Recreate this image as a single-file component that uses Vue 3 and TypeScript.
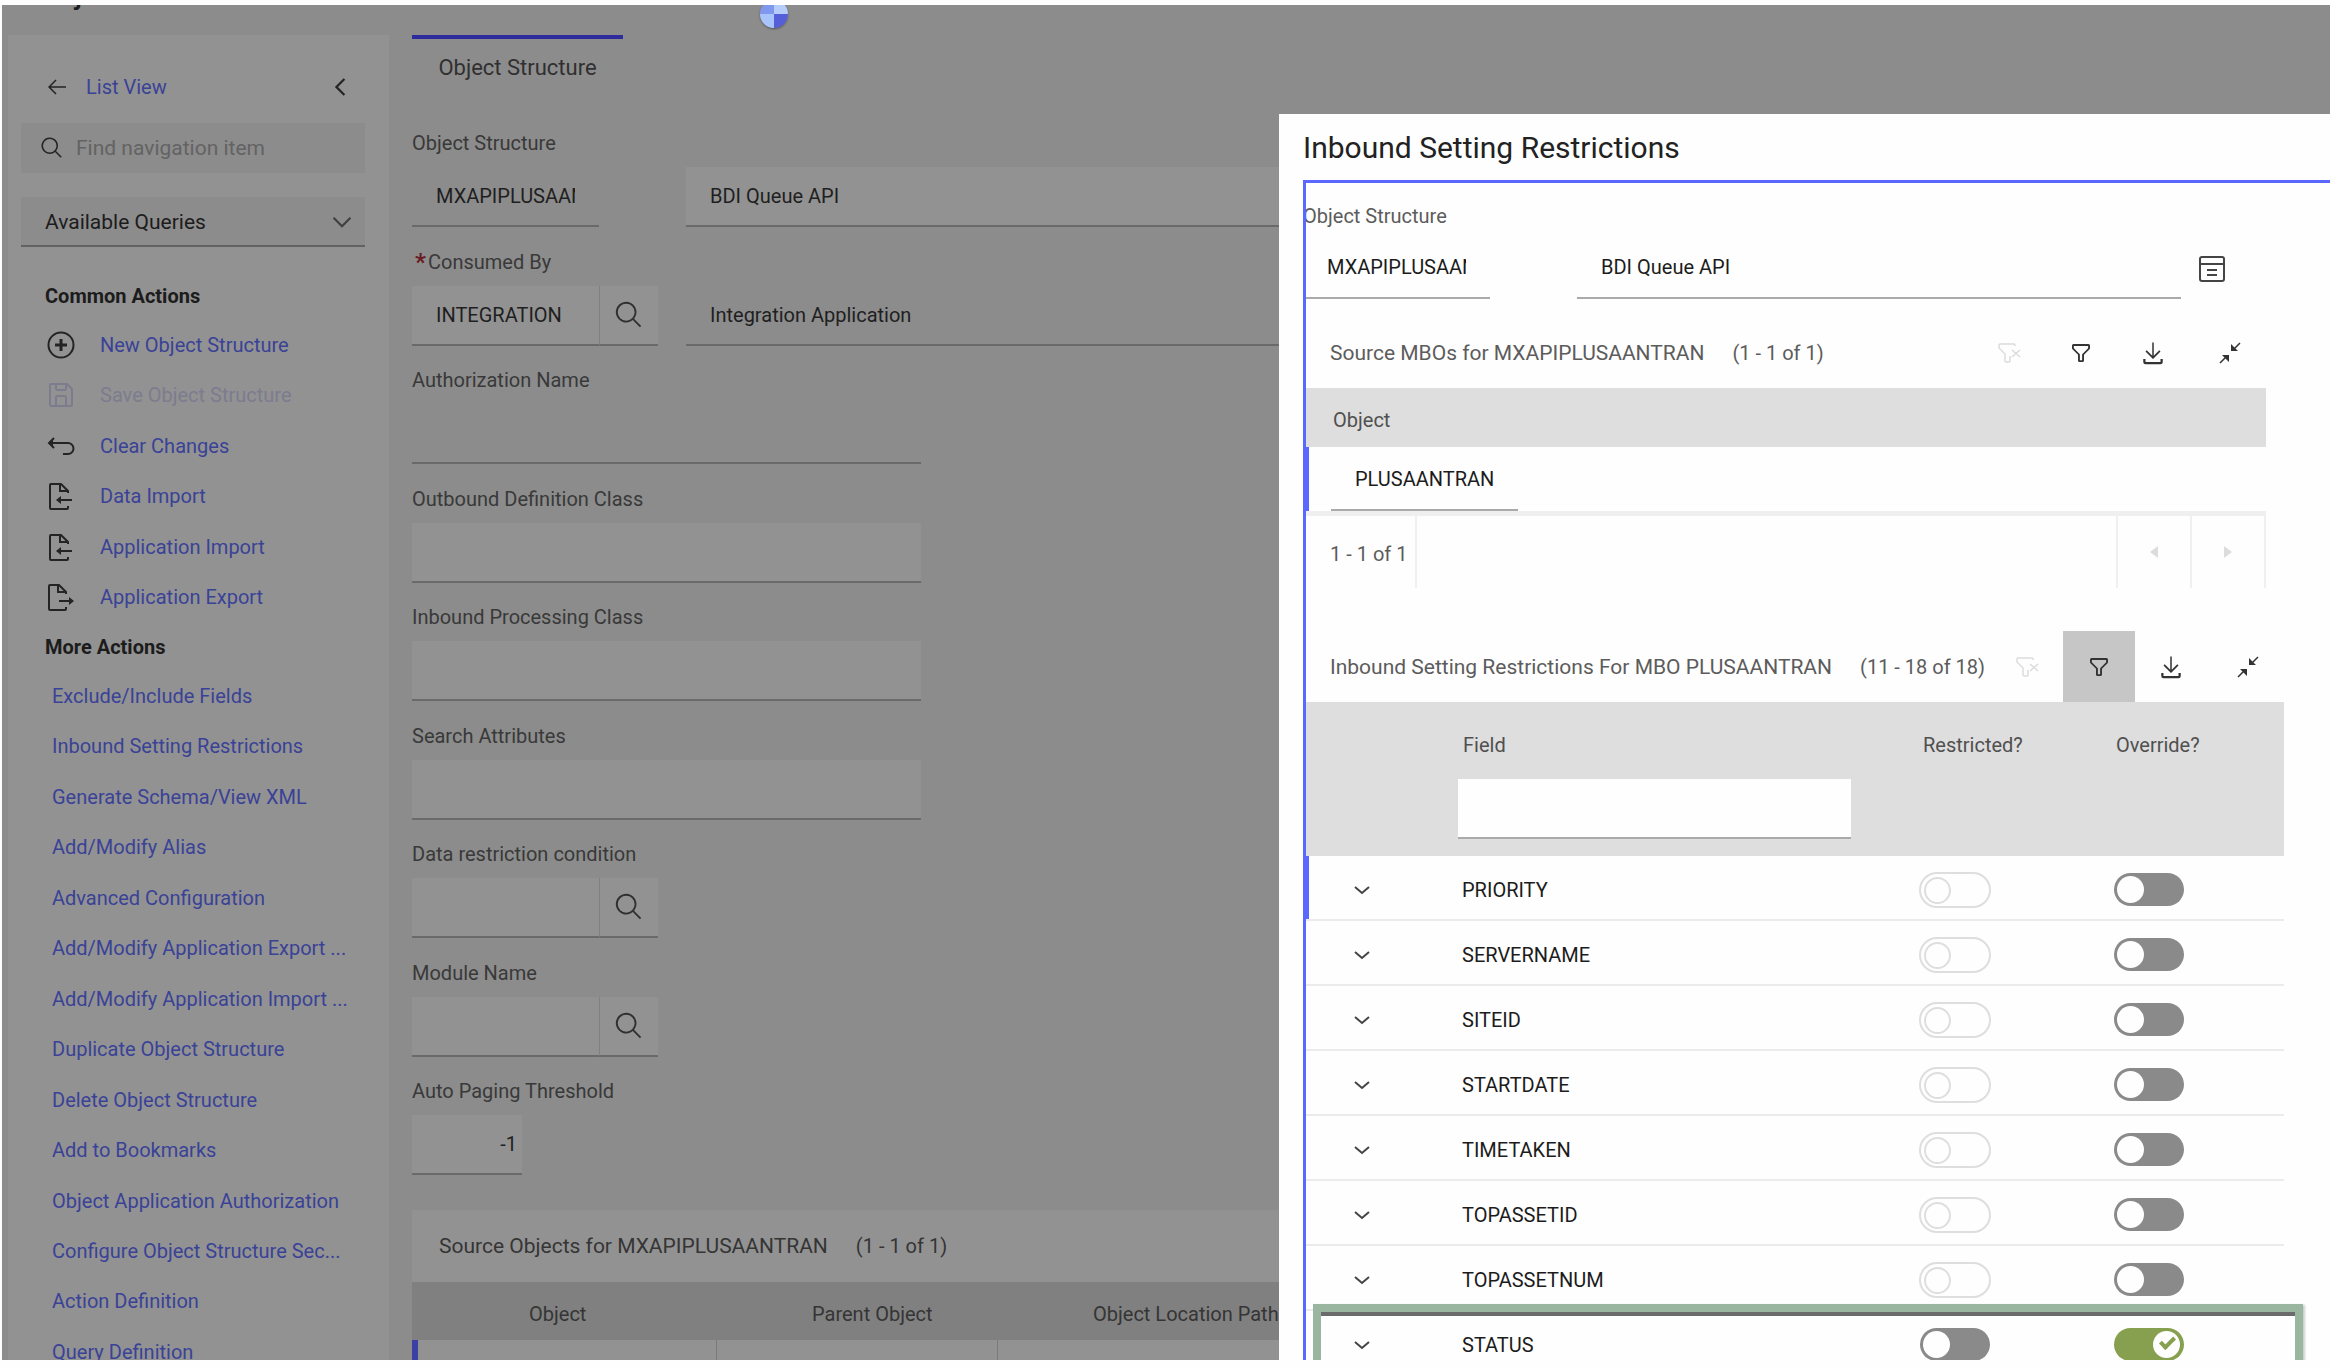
<script setup lang="ts">
import { ref } from 'vue'

interface Action {
  label: string
  icon: 'add' | 'save' | 'undo' | 'import' | 'export'
  disabled?: boolean
}

interface Restriction {
  field: string
  restricted: boolean
  override: boolean
  locked: boolean
}

const commonActions: Action[] = [
  { label: 'New Object Structure', icon: 'add' },
  { label: 'Save Object Structure', icon: 'save', disabled: true },
  { label: 'Clear Changes', icon: 'undo' },
  { label: 'Data Import', icon: 'import' },
  { label: 'Application Import', icon: 'import' },
  { label: 'Application Export', icon: 'export' },
]

const moreActions: string[] = [
  'Exclude/Include Fields',
  'Inbound Setting Restrictions',
  'Generate Schema/View XML',
  'Add/Modify Alias',
  'Advanced Configuration',
  'Add/Modify Application Export ...',
  'Add/Modify Application Import ...',
  'Duplicate Object Structure',
  'Delete Object Structure',
  'Add to Bookmarks',
  'Object Application Authorization',
  'Configure Object Structure Sec...',
  'Action Definition',
  'Query Definition',
]

const plainFields = [
  { id: 'authorization', label: 'Authorization Name', readonly: true },
  { id: 'outbound', label: 'Outbound Definition Class', readonly: false },
  { id: 'inbound', label: 'Inbound Processing Class', readonly: false },
  { id: 'search-attributes', label: 'Search Attributes', readonly: false },
]

const lookupFields = [
  { id: 'data-restriction', label: 'Data restriction condition' },
  { id: 'module-name', label: 'Module Name' },
]

const locked = (field: string): Restriction => ({ field, restricted: false, override: false, locked: true })

const restrictions = ref<Restriction[]>([
  locked('PRIORITY'),
  locked('SERVERNAME'),
  locked('SITEID'),
  locked('STARTDATE'),
  locked('TIMETAKEN'),
  locked('TOPASSETID'),
  locked('TOPASSETNUM'),
  { field: 'STATUS', restricted: false, override: true, locked: false },
])
</script>

<template>
  <div class="window">
    <div class="screen">
      <header class="banner">
        <h1>Object Structures</h1>
      </header>
      <span class="spinner" role="img" aria-label="Loading"></span>

      <div class="workspace">
        <nav class="sidebar" aria-label="Actions">
          <div class="back">
            <a href="#">
              <svg class="i24" viewBox="0 0 32 32"><path d="M14 26l1.4-1.4L7.8 17H28v-2H7.8l7.6-7.6L14 6 4 16z" /></svg>
              List View
            </a>
            <button type="button" aria-label="Collapse navigation">
              <svg class="i28" viewBox="0 0 32 32"><path d="M9 16L19 6l1.8 1.8L12.6 16l8.2 8.2L19 26z" /></svg>
            </button>
          </div>

          <div class="find">
            <svg class="i24" viewBox="0 0 32 32"><path d="M29 27.6l-7.6-7.6a11 11 0 1 0-1.4 1.4l7.6 7.6zM4 13a9 9 0 1 1 9 9 9 9 0 0 1-9-9z" /></svg>
            <input type="search" placeholder="Find navigation item" aria-label="Find navigation item" />
          </div>

          <div class="queries">
            <select aria-label="Available Queries">
              <option>Available Queries</option>
            </select>
            <svg class="i28" viewBox="0 0 32 32"><path d="M16 22.500L5.500 12l1.700-1.800 8.800 8.800 8.800-8.800 1.700 1.800z" /></svg>
          </div>

          <h2>Common Actions</h2>
          <ul class="common">
            <li v-for="action in commonActions" :key="action.label">
              <a href="#" :class="{ off: action.disabled }">
                <svg v-if="action.icon === 'add'" class="line i28" viewBox="0 0 28 28">
                  <circle cx="14" cy="14" r="12.500" />
                  <path class="bold" d="M14 8v12M8 14h12" />
                </svg>
                <svg v-else-if="action.icon === 'save'" class="line i28" viewBox="0 0 28 28">
                  <path d="M4 3h16l5 5v16a1 1 0 0 1-1 1H4a1 1 0 0 1-1-1V4a1 1 0 0 1 1-1z" />
                  <path d="M9 3v5a1 1 0 0 0 1 1h8a1 1 0 0 0 1-1V3M9 25v-9a1 1 0 0 1 1-1h8a1 1 0 0 1 1 1v9" />
                </svg>
                <svg v-else-if="action.icon === 'undo'" class="line i28" viewBox="0 0 28 28">
                  <path d="M3 11h18a5.500 5.500 0 0 1 0 11h-5M7 6l-5 5 5 5" />
                  <path class="solid" d="M2 11l4-4v8z" />
                </svg>
                <svg v-else-if="action.icon === 'import'" class="line i28" viewBox="0 0 28 28">
                  <path d="M21 11V9l-7-7H4a1 1 0 0 0-1 1v23a1 1 0 0 0 1 1h16a1 1 0 0 0 1-1v-2M13 2v7h8" />
                  <path d="M25 18H10" />
                  <path class="solid" d="M9 18l5-4v8z" />
                </svg>
                <svg v-else class="line i28" viewBox="0 0 28 28">
                  <path d="M19 11V9l-7-7H3a1 1 0 0 0-1 1v23a1 1 0 0 0 1 1h15a1 1 0 0 0 1-1v-2M11 2v7h8" />
                  <path d="M12 18h14" />
                  <path class="solid" d="M27 18l-5-4v8z" />
                </svg>
                <span>{{ action.label }}</span>
              </a>
            </li>
          </ul>

          <h2>More Actions</h2>
          <ul class="more">
            <li v-for="label in moreActions" :key="label"><a href="#">{{ label }}</a></li>
          </ul>
        </nav>

        <main class="record">
          <button type="button" class="tab">Object Structure</button>

          <form class="fields" @submit.prevent>
            <div class="field">
              <label for="structure">Object Structure</label>
              <div class="controls">
                <input id="structure" class="short readonly" value="MXAPIPLUSAANTRAN" readonly />
                <input class="wide" value="BDI Queue API" aria-label="Object structure description" />
              </div>
            </div>
            <div class="field">
              <label for="consumed"><b class="required">*</b>Consumed By</label>
              <div class="controls">
                <span class="lookup">
                  <input id="consumed" class="short" value="INTEGRATION" />
                  <button type="button" aria-label="Select value">
                    <svg class="i30" viewBox="0 0 32 32"><path d="M29 27.600l-7.600-7.600a11 11 0 1 0-1.400 1.400l7.600 7.600zM4 13a9 9 0 1 1 9 9 9 9 0 0 1-9-9z" /></svg>
                  </button>
                </span>
                <input class="wide readonly" value="Integration Application" aria-label="Consumer description" readonly />
              </div>
            </div>
            <div v-for="f in plainFields" :key="f.id" class="field">
              <label :for="f.id">{{ f.label }}</label>
              <input :id="f.id" class="long" :class="{ readonly: f.readonly }" :readonly="f.readonly" />
            </div>
            <div v-for="f in lookupFields" :key="f.id" class="field">
              <label :for="f.id">{{ f.label }}</label>
              <span class="lookup">
                <input :id="f.id" class="short" />
                <button type="button" aria-label="Select value">
                  <svg class="i30" viewBox="0 0 32 32"><path d="M29 27.600l-7.600-7.600a11 11 0 1 0-1.400 1.400l7.600 7.600zM4 13a9 9 0 1 1 9 9 9 9 0 0 1-9-9z" /></svg>
                </button>
              </span>
            </div>
            <div class="field">
              <label for="threshold">Auto Paging Threshold</label>
              <input id="threshold" class="number" value="-1" />
            </div>
          </form>

          <section class="sources">
            <div class="caption">
              <h3>Source Objects for MXAPIPLUSAANTRAN</h3>
              <span>(1 - 1 of 1)</span>
            </div>
            <table>
              <thead>
                <tr><th>Object</th><th>Parent Object</th><th>Object Location Path</th></tr>
              </thead>
              <tbody>
                <tr><td></td><td></td><td></td></tr>
              </tbody>
            </table>
          </section>
        </main>
      </div>

      <div class="dialog" role="dialog" aria-labelledby="dialog-title">
        <h2 id="dialog-title">Inbound Setting Restrictions</h2>
        <div class="panel">
          <label class="name" for="dialog-structure">Object Structure</label>
          <div class="names">
            <input id="dialog-structure" class="short" value="MXAPIPLUSAANTRAN" readonly />
            <input class="text" value="BDI Queue API" aria-label="Description" readonly />
            <button type="button" aria-label="Long description">
              <svg class="line i28" viewBox="0 0 28 28">
                <rect x="2" y="2" width="24" height="24" rx="2" />
                <path d="M2 9h24M9 15h10M9 20h10" />
              </svg>
            </button>
          </div>

          <section class="grid first">
            <div class="bar">
              <h3>Source MBOs for MXAPIPLUSAANTRAN</h3>
              <span>(1 - 1 of 1)</span>
              <div class="tools">
                <button type="button" disabled aria-label="Clear filter">
                  <svg class="line thin" viewBox="0 0 24 24"><path d="M18 5V4a1 1 0 0 0-1-1H3a1 1 0 0 0-1 1v3l6 6v7a1 1 0 0 0 1 1h3a1 1 0 0 0 1-1v-5M15 9l8 7M23 9l-8 7" /></svg>
                </button>
                <button type="button" aria-label="Filter">
                  <svg viewBox="0 0 32 32"><path d="M18 28h-4a2 2 0 0 1-2-2v-7.600L4.600 11A2 2 0 0 1 4 9.600V6a2 2 0 0 1 2-2h20a2 2 0 0 1 2 2v3.600a2 2 0 0 1-.6 1.400L20 18.400V26a2 2 0 0 1-2 2zM6.500 6.500v3l8 8v8h3v-8l8-8v-3z" /></svg>
                </button>
                <button type="button" aria-label="Download">
                  <svg viewBox="0 0 32 32"><path d="M26 24v4H6v-4H3v4a3 3 0 0 0 3 3h20a3 3 0 0 0 3-3v-4zM26 14l-1.600-1.600-7.400 7.400V2h-2v17.800l-7.400-7.400L6 14l10 10z" /></svg>
                </button>
                <button type="button" aria-label="Collapse">
                  <svg class="line thin" viewBox="0 0 24 24"><path d="M2 22l6-6M22 2l-6 6" /><path class="solid" d="M4 14h7v7zM13 3v7h7z" /></svg>
                </button>
              </div>
            </div>
            <table>
              <thead><tr><th>Object</th></tr></thead>
              <tbody>
                <tr class="selected"><td><input class="short" value="PLUSAANTRAN" aria-label="Object" readonly /></td></tr>
              </tbody>
            </table>
            <div class="pager">
              <span>1 - 1 of 1</span>
              <button type="button" disabled aria-label="Previous page"><svg viewBox="0 0 16 16"><path d="M12 2v12L4 8z" /></svg></button>
              <button type="button" disabled aria-label="Next page"><svg viewBox="0 0 16 16"><path d="M4 2v12l8-6z" /></svg></button>
            </div>
          </section>

          <section class="grid second">
            <div class="bar">
              <h3>Inbound Setting Restrictions For MBO PLUSAANTRAN</h3>
              <span>(11 - 18 of 18)</span>
              <div class="tools">
                <button type="button" disabled aria-label="Clear filter">
                  <svg class="line thin" viewBox="0 0 24 24"><path d="M18 5V4a1 1 0 0 0-1-1H3a1 1 0 0 0-1 1v3l6 6v7a1 1 0 0 0 1 1h3a1 1 0 0 0 1-1v-5M15 9l8 7M23 9l-8 7" /></svg>
                </button>
                <button type="button" class="active" aria-label="Filter" aria-pressed="true">
                  <svg viewBox="0 0 32 32"><path d="M18 28h-4a2 2 0 0 1-2-2v-7.600L4.600 11A2 2 0 0 1 4 9.600V6a2 2 0 0 1 2-2h20a2 2 0 0 1 2 2v3.600a2 2 0 0 1-.6 1.400L20 18.400V26a2 2 0 0 1-2 2zM6.500 6.500v3l8 8v8h3v-8l8-8v-3z" /></svg>
                </button>
                <button type="button" aria-label="Download">
                  <svg viewBox="0 0 32 32"><path d="M26 24v4H6v-4H3v4a3 3 0 0 0 3 3h20a3 3 0 0 0 3-3v-4zM26 14l-1.600-1.600-7.400 7.400V2h-2v17.800l-7.400-7.400L6 14l10 10z" /></svg>
                </button>
                <button type="button" aria-label="Collapse">
                  <svg class="line thin" viewBox="0 0 24 24"><path d="M2 22l6-6M22 2l-6 6" /><path class="solid" d="M4 14h7v7zM13 3v7h7z" /></svg>
                </button>
              </div>
            </div>
            <table>
              <colgroup><col class="c-toggle" /><col class="c-field" /><col class="c-restricted" /><col /></colgroup>
              <thead>
                <tr>
                  <th></th>
                  <th><label for="filter-field">Field</label><input id="filter-field" /></th>
                  <th>Restricted?</th>
                  <th>Override?</th>
                </tr>
              </thead>
              <tbody>
                <tr v-for="(row, i) in restrictions" :key="row.field" :class="{ selected: i === 0 }">
                  <td class="expand">
                    <button type="button" :aria-label="'Expand ' + row.field">
                      <svg class="line" viewBox="0 0 20 20"><path d="M3 7l7 6 7-6" /></svg>
                    </button>
                  </td>
                  <td>{{ row.field }}</td>
                  <td><input v-model="row.restricted" class="switch" type="checkbox" :disabled="row.locked" :aria-label="row.field + ' restricted'" /></td>
                  <td><input v-model="row.override" class="switch" type="checkbox" :aria-label="row.field + ' override'" /></td>
                </tr>
              </tbody>
            </table>
          </section>
          <div class="highlight"></div>
        </div>
      </div>
    </div>
  </div>
</template>

<style>
html,
body {
  background: #fefefe;
  overflow: hidden;
}
</style>

<style scoped>
.window {
  box-sizing: border-box;
  height: 100vh;
  padding: 5px 0 9px 2px;
  font-family: Roboto, 'Liberation Sans', sans-serif;
  font-size: 20px;
  line-height: 24px;
  color: #1c1c1c;
}
.window *,
.window *::before,
.window *::after {
  box-sizing: border-box;
}
.screen {
  position: relative;
  height: 100%;
  overflow: hidden;
  background: #8c8c8c;
}
h1,
h2,
h3,
ul {
  margin: 0;
  padding: 0;
  list-style: none;
}
button,
input,
select {
  margin: 0;
  padding: 0;
  border: 0;
  border-radius: 0;
  background: transparent;
  font: inherit;
  color: inherit;
}
button {
  display: flex;
  align-items: center;
  justify-content: center;
}
svg {
  display: block;
  width: 24px;
  height: 24px;
  flex: none;
  fill: currentColor;
}
.i28 {
  width: 28px;
  height: 28px;
}
.i30 {
  width: 30px;
  height: 30px;
}
.line {
  fill: none;
  stroke: currentColor;
  stroke-width: 2;
}
.line.thin {
  stroke-width: 1.5;
}
.line .bold {
  stroke-width: 3;
}
.line .solid {
  fill: currentColor;
  stroke: none;
}

.banner {
  display: flex;
  align-items: flex-start;
  height: 30px;
  padding-left: 38px;
}
.banner h1 {
  margin-top: -24px;
  font-size: 28px;
  line-height: 28px;
  font-weight: 500;
}
.spinner {
  position: absolute;
  left: 758px;
  top: -5px;
  width: 28px;
  height: 28px;
  border-radius: 50%;
  background: conic-gradient(#b4cdfa 0 25%, #5560d8 0 50%, #a9c3fb 0 75%, #7f97ec 0);
  box-shadow: 0 1px 2px #555;
}
.workspace {
  display: flex;
}

.sidebar {
  flex: none;
  width: 381px;
  margin-left: 6px;
  padding: 38px 24px 0 13px;
  background: #929292;
}
.sidebar a {
  display: flex;
  align-items: center;
  color: #3a4297;
  text-decoration: none;
}
.sidebar svg {
  color: #242424;
}
.back {
  display: flex;
  align-items: center;
  justify-content: space-between;
  height: 28px;
  padding: 0 10px 0 24px;
}
.back a {
  gap: 17px;
}
.find {
  display: flex;
  align-items: center;
  gap: 12px;
  height: 50px;
  margin-top: 22px;
  padding-left: 19px;
  background: #8c8c8c;
}
.find input {
  flex: 1;
  min-width: 0;
  font-size: 21px;
}
.find input::placeholder {
  color: #636363;
  opacity: 1;
}
.queries {
  position: relative;
  margin-top: 24px;
}
.queries select {
  width: 100%;
  height: 50px;
  padding: 2px 48px 0 24px;
  border-bottom: 2px solid #626262;
  background: #8c8c8c;
  appearance: none;
  font-size: 21px;
}
.queries svg {
  position: absolute;
  right: 9px;
  top: 11px;
  color: #3f3f3f;
  pointer-events: none;
}
.sidebar h2 {
  padding-left: 24px;
  font-size: 20px;
  line-height: 24px;
  font-weight: 700;
}
.queries + h2 {
  margin-top: 37px;
}
.common,
.more {
  display: flex;
  flex-direction: column;
  justify-content: space-between;
}
.common {
  height: 280px;
  margin: 23px 0 24px;
  padding-left: 26px;
}
.common a {
  gap: 25px;
  height: 28px;
}
.common .off,
.common .off svg {
  color: #7d7c8e;
}
.more {
  height: 680px;
  margin-top: 25px;
  padding-left: 31px;
}
.more li {
  white-space: nowrap;
}

.record {
  flex: 1;
  min-width: 0;
  padding-left: 23px;
  color: #1f1f1f;
}
.tab {
  width: 211px;
  height: 62px;
  border-top: 4px solid #2e2b9c;
  color: #303030;
  font-size: 22px;
}
.fields {
  display: flex;
  flex-direction: column;
  justify-content: space-between;
  height: 1044px;
  margin-top: 34px;
}
.field label {
  display: flex;
  margin-bottom: 12px;
  color: #393939;
}
.field .required {
  width: 16px;
  padding-left: 3px;
  color: #6a1c22;
  font-size: 24px;
}
.field input {
  display: block;
  height: 60px;
  padding: 0 24px;
  border-bottom: 2px solid #6a6a6a;
  background: #929292;
}
.field input.readonly {
  background: transparent;
}
.controls {
  display: grid;
  grid-template-columns: 274px 1fr;
}
.short {
  width: 187px;
}
.long {
  width: 509px;
}
.field input.number {
  width: 110px;
  padding: 0 5px;
  text-align: right;
}
.lookup {
  display: flex;
}
.lookup button {
  width: 59px;
  height: 60px;
  border-left: 1px solid #808080;
  border-bottom: 2px solid #6a6a6a;
  background: #929292;
  color: #303030;
}
.sources {
  margin-top: 35px;
  background: #929292;
  color: #353535;
}
.caption {
  display: flex;
  align-items: center;
  gap: 28px;
  height: 72px;
  padding-left: 27px;
}
h3 {
  font-size: 21px;
  line-height: 28px;
  font-weight: 400;
}
table {
  border-collapse: separate;
  border-spacing: 0;
  table-layout: fixed;
}
th {
  font-weight: 400;
  text-align: left;
}
td {
  padding: 0;
}
.sources table {
  width: 100%;
}
.sources th {
  height: 58px;
  padding: 6px 0 0 96px;
  background: #808080;
}
.sources th:first-child {
  width: 304px;
  padding-left: 117px;
}
.sources th:nth-child(2) {
  width: 281px;
}
.sources td {
  height: 60px;
  border-left: 1px solid #7a7a7a;
}
.sources td:first-child {
  border-left: 6px solid #3a40a4;
}

.dialog {
  position: absolute;
  top: 109px;
  right: 0;
  bottom: 0;
  width: 1051px;
  padding: 14px 0 0 24px;
  overflow: hidden;
  background: #fefefe;
}
.dialog > h2 {
  margin-bottom: 12px;
  font-size: 30px;
  line-height: 40px;
  font-weight: 400;
  color: #222;
}
.panel {
  position: relative;
  height: 1200px;
  padding-top: 24px;
}
.panel::before {
  content: '';
  position: absolute;
  z-index: 1;
  inset: 0;
  border-top: 3px solid #5b68ff;
  border-left: 3px solid #5b68ff;
  pointer-events: none;
}
.name {
  display: block;
  margin-bottom: 11px;
  color: #5c5c5c;
}
.names {
  display: flex;
  align-items: center;
}
.names input {
  height: 60px;
  padding: 0 24px 2px;
  border-bottom: 2px solid #aaa;
}
.names .text {
  width: 604px;
  margin: 0 17px 0 87px;
}
.names button {
  color: #444;
}
.grid.first {
  width: 963px;
  margin-top: 18px;
}
.grid.second {
  width: 981px;
  margin-top: 43px;
}
.grid table {
  width: 100%;
}
.bar {
  display: flex;
  align-items: center;
  height: 71px;
  padding-left: 27px;
  color: #5c5c5c;
  white-space: nowrap;
}
.bar h3 {
  margin-right: 28px;
}
.tools {
  display: flex;
  align-self: stretch;
  margin-left: auto;
}
.tools button {
  width: 72px;
  color: #333;
}
.tools button:last-child {
  margin-left: 5px;
}
.tools button:disabled {
  color: #dcdcdc;
}
.tools .active {
  background: #c6c6c6;
}
.grid th {
  background: #dedede;
  color: #505050;
}
.first th {
  height: 59px;
  padding: 4px 0 0 30px;
}
.selected {
  box-shadow: inset 6px 0 #5b68ff;
}
.first td {
  height: 69px;
  padding-left: 28px;
  border-bottom: 5px solid #efefef;
}
.first td input {
  display: block;
  height: 64px;
  padding: 2px 24px 0;
  border-bottom: 2px solid #aaa;
}
.pager {
  display: flex;
  height: 72px;
  color: #5c5c5c;
}
.pager span {
  width: 114px;
  margin-right: auto;
  padding-left: 27px;
  border-right: 2px solid #f0f0f0;
  line-height: 76px;
  white-space: nowrap;
}
.pager button {
  width: 74px;
  border-left: 2px solid #f0f0f0;
  color: #dcdcdc;
}
.pager button:last-child {
  width: 76px;
  border-right: 2px solid #f0f0f0;
}
.pager svg {
  width: 16px;
  height: 16px;
}
.c-toggle {
  width: 155px;
}
.c-field {
  width: 460px;
}
.c-restricted {
  width: 193px;
}
.second th {
  height: 154px;
  padding: 31px 0 0 5px;
  vertical-align: top;
}
.second th:nth-child(2) {
  padding-left: 0;
}
.second th label {
  display: block;
  padding-left: 5px;
}
.second th input {
  display: block;
  width: 393px;
  height: 60px;
  margin-top: 22px;
  padding: 0 16px;
  border-bottom: 2px solid #aaa;
  background: #fefefe;
}
.second td {
  height: 65px;
  padding: 4px 0 0 4px;
  border-bottom: 2px solid #ebebeb;
}
.second td:nth-child(3) {
  padding-left: 1px;
}
.second td:nth-child(4) {
  padding-left: 2px;
}
.second .expand button {
  width: 110px;
  height: 56px;
  color: #444;
}
.expand svg {
  width: 20px;
  height: 20px;
}
.switch {
  display: block;
  position: relative;
  width: 70px;
  height: 33px;
  margin-left: 1px;
  border-radius: 18px;
  background: #8a8a8a;
  appearance: none;
}
.switch::before {
  content: '';
  position: absolute;
  left: 3px;
  top: 3px;
  width: 27px;
  height: 27px;
  border-radius: 50%;
  background: #fefefe;
}
.switch:disabled {
  width: 72px;
  height: 36px;
  margin-left: 0;
  border: 2px solid #dedede;
  background: transparent;
}
.switch:disabled::before {
  border: 2px solid #dedede;
}
.switch:checked {
  background: #86a04f;
}
.switch:checked::before {
  left: 39px;
}
.switch:checked::after {
  content: '';
  position: absolute;
  left: 46px;
  top: 9px;
  width: 15px;
  height: 9px;
  border-left: 4px solid #86a04f;
  border-bottom: 4px solid #86a04f;
  transform: rotate(-45deg);
}
.highlight {
  position: absolute;
  left: 10px;
  top: 1124px;
  width: 990px;
  height: 100px;
  border: 8px solid #9ab5a0;
  box-shadow: inset 0 4px #6b6b6b, 2px 1px 2px #ccc;
}
</style>
